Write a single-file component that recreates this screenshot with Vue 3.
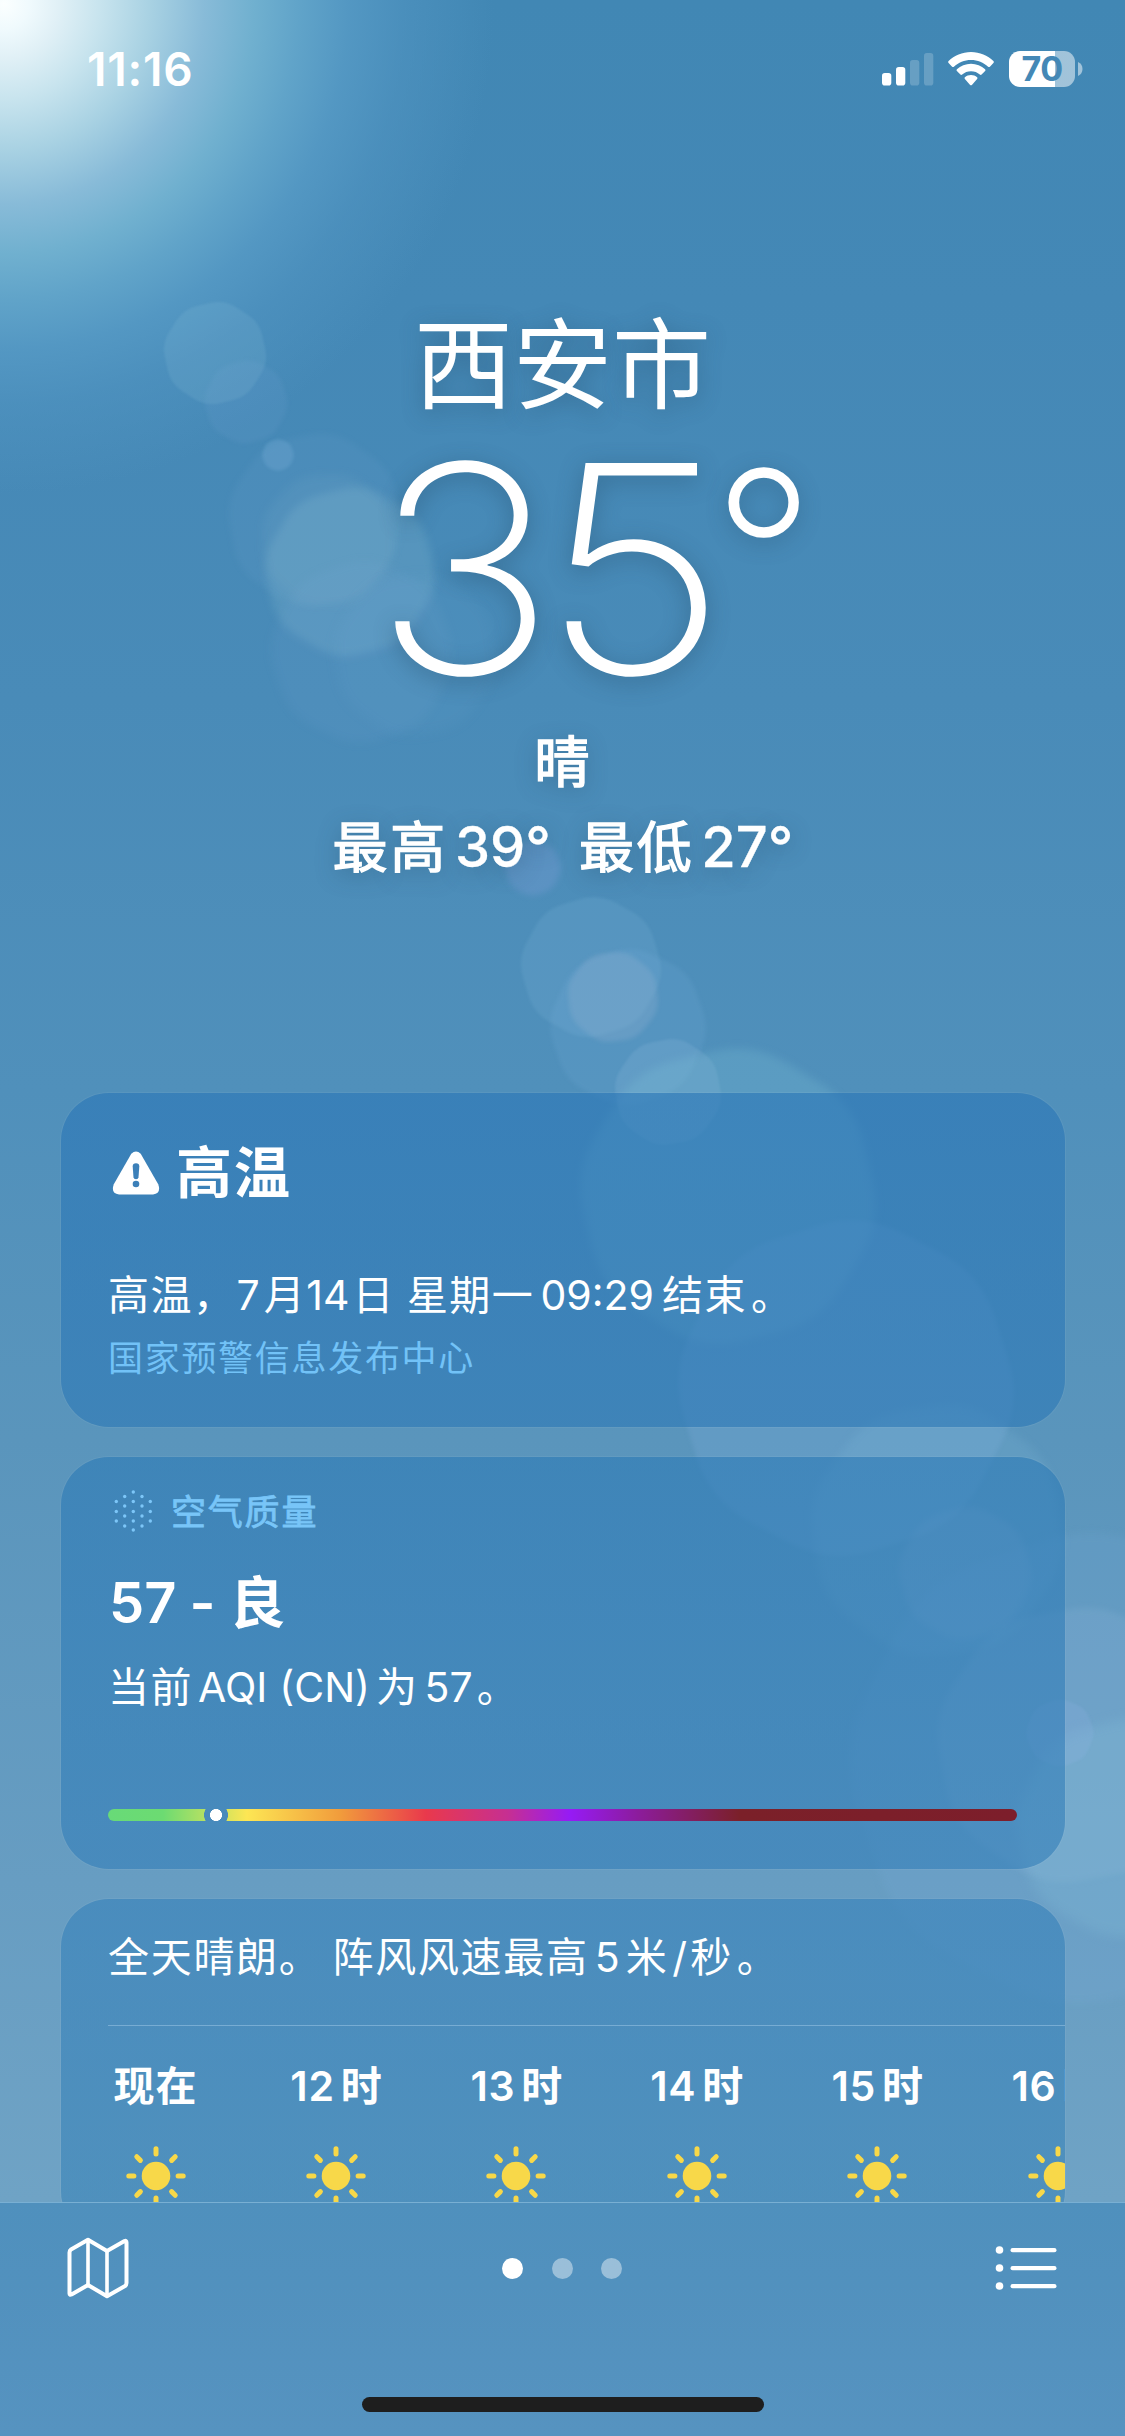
<script setup>
const flares = [
  { x: 215, y: 353, r: 52, c: '#9fd0e4', o: 0.14, b: 1, a: 10 },
  { x: 246, y: 402, r: 42, c: '#86b0e0', o: 0.1, b: 2, a: 5 },
  { x: 278, y: 455, r: 16, c: '#8fc4ea', o: 0.2, b: 1.5, a: 0 },
  { x: 315, y: 520, r: 88, c: '#86b0e0', o: 0.09, b: 3, a: 12 },
  { x: 350, y: 572, r: 86, c: '#9fcfdc', o: 0.17, b: 4, a: 8 },
  { x: 328, y: 540, r: 68, c: '#a8c8de', o: 0.08, b: 5, a: 20 },
  { x: 362, y: 652, r: 92, c: '#86b4e4', o: 0.08, b: 5, a: 4 },
  { x: 415, y: 655, r: 82, c: '#86b4e4', o: 0.07, b: 6, a: 14 },
  { x: 533, y: 868, r: 28, c: '#8fa4e0', o: 0.24, b: 3, a: 0 },
  { x: 591, y: 967, r: 71, c: '#8fc0e4', o: 0.15, b: 1.5, a: 6 },
  { x: 613, y: 997, r: 46, c: '#b0bcd8', o: 0.2, b: 2, a: 16 },
  { x: 628, y: 1027, r: 79, c: '#86bce4', o: 0.13, b: 2, a: 3 },
  { x: 668, y: 1092, r: 54, c: '#a0c8e4', o: 0.16, b: 1, a: 12 },
  { x: 728, y: 1196, r: 150, c: '#84c8dc', o: 0.22, b: 4, a: 9 },
  { x: 846, y: 1388, r: 170, c: '#8cb8e8', o: 0.18, b: 2, a: 5 },
  { x: 937, y: 1530, r: 128, c: '#8cc4e4', o: 0.14, b: 4, a: 14 },
  { x: 965, y: 1573, r: 67, c: '#a8bce0', o: 0.17, b: 3, a: 7 },
  { x: 1085, y: 1768, r: 238, c: '#80b4e8', o: 0.12, b: 4, a: 4 },
  { x: 1075, y: 1745, r: 140, c: '#a0c4e6', o: 0.15, b: 3, a: 12 },
  { x: 1125, y: 1828, r: 110, c: '#98d4e4', o: 0.16, b: 6, a: 6 },
  { x: 1060, y: 1733, r: 34, c: '#9cb8ec', o: 0.17, b: 1, a: 0 },
].map((f) => {
  const n = 8
  const r = f.r * 1.04
  const pts = []
  for (let i = 0; i < n; i++) {
    const t = ((i * 45 + f.a) * Math.PI) / 180
    pts.push([f.x + r * Math.cos(t), f.y + r * Math.sin(t)])
  }
  // octagon with softened corners
  const at = (p, q, k) => `${(p[0] + (q[0] - p[0]) * k).toFixed(1)} ${(p[1] + (q[1] - p[1]) * k).toFixed(1)}`
  const d = pts.map((p, i) => {
    const prev = pts[(i + n - 1) % n]
    const next = pts[(i + 1) % n]
    return `${i ? 'L' : 'M'}${at(p, prev, 0.34)}Q${p[0].toFixed(1)} ${p[1].toFixed(1)} ${at(p, next, 0.34)}`
  }).join('')
  return { ...f, d: d + 'Z' }
})

const hours = ['', '12', '13', '14', '15', '16']
const rays = [0, 45, 90, 135, 180, 225, 270, 315]
const haze = [
  [25.3, 13], [25.3, 22.5], [25.3, 32.5], [25.3, 42], [25.3, 51],
  [16.7, 17.5], [16.7, 27], [16.7, 37], [16.7, 47],
  [34, 17.5], [34, 27], [34, 37], [34, 47],
  [8.3, 22.5], [8.3, 32.5], [8.3, 42],
  [42.3, 22.5], [42.3, 32.5], [42.3, 42],
]
const aqiMarker = 11.9
</script>

<template>
  <div class="screen">
    <div class="sun-glow"></div>
    <svg class="sky" width="1125" height="2202" viewBox="0 0 1125 2202">
      <path v-for="(f, i) in flares" :key="i" :d="f.d" :fill="f.c" :fill-opacity="f.o" :style="{ filter: `blur(${f.b}px)` }" />
    </svg>

    <div class="content">
      <header class="status">
        <span class="time">11:16</span>
        <div class="indicators">
          <svg width="52" height="34" viewBox="0 0 52 34">
            <rect x="0" y="21" width="9.3" height="12.5" rx="2.8" fill="#fff" />
            <rect x="14" y="15" width="9.3" height="18.5" rx="2.8" fill="#fff" />
            <rect x="28" y="8" width="9.3" height="25.5" rx="2.8" fill="#fff" opacity=".2" />
            <rect x="42" y="1" width="9.3" height="32.5" rx="2.8" fill="#fff" opacity=".2" />
          </svg>
          <svg class="wifi" width="46" height="34" viewBox="0 0 46 34" fill="#fff">
            <path d="M23 0C14.200 0 6.300 3.500.6 9.100Q-.3 10 .6 11L4.100 14.700Q5 15.500 5.900 14.700C10.400 10.500 16.400 7.900 23 7.900S35.600 10.500 40.100 14.700Q41 15.500 41.900 14.700L45.400 11Q46.300 10 45.400 9.100C39.700 3.500 31.800 0 23 0Z" />
            <path d="M23 11.800C17.600 11.800 12.600 13.900 8.900 17.300Q8 18.200 8.900 19.100L12.400 22.600Q13.300 23.400 14.200 22.600C16.500 20.500 19.600 19.300 23 19.300S29.500 20.500 31.800 22.600Q32.700 23.400 33.600 22.600L37.100 19.100Q38 18.200 37.100 17.300C33.400 13.900 28.400 11.800 23 11.800Z" />
            <path d="M23 23C20.700 23 18.500 23.800 16.900 25.200Q16 26 16.900 26.900L22.100 32.900Q23 33.800 23.900 32.900L29.100 26.900Q30 26 29.100 25.200C27.500 23.800 25.300 23 23 23Z" />
          </svg>
          <div class="battery"><span>70</span></div>
          <svg class="nub" width="5" height="14" viewBox="0 0 5 14"><path d="M0 0Q4.500 2 4.500 7T0 14Z" fill="#fff" opacity=".5" /></svg>
        </div>
      </header>

      <section class="current">
        <h1 class="city">西安市</h1>
        <div class="temp"><span class="three">3</span><span class="five">5</span><span class="deg">°</span></div>
        <div class="sky-state">晴</div>
        <div class="range">
          <span class="cn">最高</span><span class="val">39°</span><span class="cn low">最低</span><span class="val">27°</span>
        </div>
      </section>

      <section class="card alert">
        <div class="alert-head">
          <svg width="48" height="44" viewBox="0 0 48 44">
            <path d="M19.300 2.800Q24 -2 28.700 2.800L46.200 33.200Q49.500 42.500 41 43.500H7Q-1.500 42.500 1.800 33.200Z" fill="#fff" />
            <path d="M20.700 15.500Q20.700 12.300 24 12.300T27.300 15.500L26.500 26.300Q26.200 28.200 24 28.200T21.500 26.300Z" fill="#3c80b9" />
            <circle cx="24" cy="33" r="3.300" fill="#3c80b9" />
          </svg>
          <h2>高温</h2>
        </div>
        <p class="text alert-text"><span>高温，</span><span class="n m1">7</span><span class="m4">月</span><span class="n">14</span><span class="m3">日</span><span class="m12">星期一</span><span class="n m6">09:29</span><span class="m8">结束</span><span class="m4">。</span></p>
        <p class="source">国家预警信息发布中心</p>
      </section>

      <section class="card air">
        <div class="air-head">
          <svg width="62" height="64" viewBox="0 0 62 64">
            <circle v-for="(p, i) in haze" :key="i" :cx="p[0]" :cy="p[1]" r="1.700" fill="#7cc6f8" />
          </svg>
          <span>空气质量</span>
        </div>
        <div class="air-value"><span>57</span><span class="dash">-</span><span class="grade">良</span></div>
        <p class="text air-text"><span>当前</span><span class="n m5">AQI</span><span class="n m12">(CN)</span><span class="m6">为</span><span class="n m6">57</span><span class="m4">。</span></p>
        <div class="scale"><i class="marker" :style="{ left: aqiMarker + '%' }"></i></div>
      </section>

      <section class="card hourly">
        <p class="text summary"><span>全天晴朗。</span><span class="m11">阵风风速最高</span><span class="n m6">5</span><span class="m6">米</span><span class="n m4">/</span><span class="m3">秒</span><span class="m4">。</span></p>
        <div class="hours">
          <div v-for="h in hours" :key="h" class="hour">
            <div class="label"><template v-if="h"><span>{{ h }}</span><span class="shi">时</span></template><span v-else class="now">现在</span></div>
            <svg width="60" height="60" viewBox="-30 -30 60 60">
              <circle r="14.300" fill="#f8d849" />
              <line v-for="r in rays" :key="r" x1="0" y1="-22.100" x2="0" y2="-27.200" :transform="`rotate(${r})`" stroke="#f8d849" stroke-width="5" stroke-linecap="round" />
            </svg>
          </div>
        </div>
      </section>
    </div>

    <nav class="toolbar">
      <div class="tools">
        <svg width="64" height="62" viewBox="0 0 64 62" fill="none" stroke="#fff" stroke-width="4" stroke-linejoin="round" stroke-linecap="round">
          <path d="M3.500 15.500Q3.500 13.500 5 12.500L22 2.800L41 14L58.500 4Q60.500 3.200 60.500 5.500V46Q60.500 48 59 49L41 59.300L22 48L5.500 57.500Q3.500 58.300 3.500 56.500Z" />
          <path d="M22 3V48M41 14V59" stroke-width="3.600" />
        </svg>
        <div class="dots"><i class="on"></i><i></i><i></i></div>
        <svg width="62" height="44" viewBox="0 0 62 44" fill="#fff">
          <template v-for="y in [4, 22, 40]" :key="y">
            <circle cx="4.500" :cy="y" r="3.800" />
            <rect x="15.500" :y="y - 2" width="46" height="4.300" rx="2.100" />
          </template>
        </svg>
      </div>
      <div class="home"></div>
    </nav>
  </div>
</template>

<style>
html, body { margin: 0; padding: 0; }
</style>

<style scoped>
.screen {
  position: relative;
  display: flex;
  flex-direction: column;
  width: 1125px;
  height: 2436px;
  overflow: hidden;
  color: #fff;
  font-family: Inter, "Noto Sans CJK SC", sans-serif;
  background: linear-gradient(180deg, #4187b4 0, #4488b6 300px, #498bb8 700px, #5090bb 1090px, #5a95bc 1440px, #679dc2 1880px, #6fa3c5 2202px);
}
h1, h2, p { margin: 0; font-weight: 400; }
.sky { position: absolute; left: 0; top: 0; }
.sun-glow {
  position: absolute;
  left: 0;
  top: 0;
  width: 520px;
  height: 520px;
  background: radial-gradient(circle at 4px 4px, #fbffff 0, #f0fafd 25px, #e0f0f6 55px, #c8e4ee 95px, #a9d2e3 145px, #88bbd8 200px, #70b0cf 250px, rgba(98, 165, 202, .95) 295px, rgba(86, 154, 197, .85) 345px, rgba(80, 148, 193, .6) 400px, rgba(72, 142, 188, 0) 490px);
}
.content {
  position: relative;
  display: flex;
  flex-direction: column;
  height: 2202px;
  overflow: hidden;
}

.status {
  display: flex;
  justify-content: space-between;
  flex: none;
  box-sizing: border-box;
  height: 308px;
  padding: 44px 42px 0 87px;
}
.time { font-size: 46px; line-height: 50px; font-weight: 600; letter-spacing: .8px; }
.indicators { display: flex; align-items: center; height: 36px; margin-top: 7px; }
.wifi { margin-left: 14px; }
.battery {
  width: 66px;
  height: 36px;
  margin-left: 15px;
  border-radius: 11px;
  background: linear-gradient(90deg, #fff 46px, rgba(255, 255, 255, .5) 46px);
  text-align: center;
}
.battery span { font-size: 34px; line-height: 36px; font-weight: 700; color: #4488b6; letter-spacing: -.5px; }
.nub { margin-left: 3px; }

.current {
  display: flex;
  flex-direction: column;
  align-items: center;
  flex: none;
  height: 785px;
  text-shadow: 0 5px 22px rgba(35, 75, 105, .45);
}
.city { font-size: 99px; line-height: 114px; }
.temp {
  display: flex;
  align-self: flex-start;
  margin-top: 2px;
  padding-left: 373px;
  font-size: 290px;
  line-height: 290px;
  font-weight: 200;
}
.three { transform: scaleX(1.06); transform-origin: left; }
.five { margin-left: -5px; transform: scaleX(1.12); transform-origin: left; }
.deg { margin: -17px 0 17px 5px; font-size: 224px; line-height: 290px; font-weight: 200; -webkit-text-stroke: 1.600px #fff; }
.sky-state { margin-top: 13px; margin-right: 1px; font-size: 55px; line-height: 70px; -webkit-text-stroke: 1.700px #fff; }
.range {
  display: flex;
  align-items: baseline;
  margin-top: 14px;
  padding-left: 1px;
  font-size: 56px;
  line-height: 72px;
  font-weight: 500;
}
.range .cn { font-size: 55px; font-weight: 400; letter-spacing: 2.7px; -webkit-text-stroke: 1.400px #fff; }
.range .val { margin-left: 7px; -webkit-text-stroke: .3px #fff; }
.range .low { margin-left: 28px; }

.card {
  flex: none;
  box-sizing: border-box;
  width: 1004px;
  margin-left: 61px;
  padding-left: 47px;
  border-radius: 48px;
  overflow: hidden;
  box-shadow: 0 0 0 1px rgba(255, 255, 255, .05);
}
.alert { height: 334px; padding-top: 45px; background: linear-gradient(180deg, rgba(42, 118, 183, .6), rgba(44, 120, 182, .6)); }
.air { height: 412px; margin-top: 30px; padding-top: 32px; background: linear-gradient(180deg, rgba(44, 122, 182, .6), rgba(52, 127, 185, .6)); }
.hourly { height: 340px; margin-top: 30px; padding-top: 31px; background: linear-gradient(180deg, rgba(54, 129, 186, .6), rgba(58, 132, 184, .6) 303px); }

.text { display: flex; font-size: 41px; line-height: 54px; letter-spacing: 1.5px; white-space: nowrap; }
.text .n { letter-spacing: 0; }
.m1 { margin-left: 1px; }
.m3 { margin-left: 3px; }
.m4 { margin-left: 4px; }
.m5 { margin-left: 5px; }
.m6 { margin-left: 6px; }
.m8 { margin-left: 8px; }
.m11 { margin-left: 11px; }
.m12 { margin-left: 12px; }

.alert-head { display: flex; height: 70px; }
.alert-head svg { margin: 13px 0 0 4px; }
.alert-head h2 { margin-left: 16px; font-size: 56px; line-height: 70px; font-weight: 700; letter-spacing: 2px; }
.alert-text { margin-top: 60px; }
.source { margin-top: 13px; font-size: 35px; line-height: 46px; letter-spacing: 1.7px; color: #72c2f7; }

.air-head { display: flex; height: 46px; color: #78c5f8; font-size: 35px; line-height: 46px; letter-spacing: 1.8px; -webkit-text-stroke: .8px #78c5f8; }
.air-head svg { flex: none; margin-top: -10px; }
.air-head span { padding-left: 1px; }
.air-value { display: flex; margin: 33px 0 0 1px; font-size: 56px; line-height: 70px; font-weight: 600; }
.dash { margin-left: 13px; }
.grade { margin-left: 14px; }
.air-text { margin-top: 22px; }
.scale {
  position: relative;
  width: 909px;
  height: 12px;
  margin-top: 95px;
  border-radius: 6px;
  background: linear-gradient(90deg, #68da78 0, #6cdb72 55px, #fde654 139px, #f19c3c 232px, #e9394c 318px, #c62f92 400px, #961bf5 462px, #8c1c9c 530px, #7b2029 632px, #7d1e2b 909px);
}
.marker {
  position: absolute;
  top: 0;
  width: 12px;
  height: 12px;
  margin-left: -6px;
  border-radius: 50%;
  background: #fff;
}
.marker::before {
  content: '';
  position: absolute;
  left: -6px;
  top: 0;
  width: 24px;
  height: 12px;
  background: radial-gradient(circle at 12px 6px, #fff 5.700px, #488abb 6.300px, #488abb 11.600px, transparent 12.200px);
}

.summary { padding-bottom: 41px; border-bottom: 1px solid rgba(190, 220, 245, .38); letter-spacing: 1.7px; }
.hours { display: flex; margin: 33px 0 0 -42.600px; }
.hour { display: flex; flex-direction: column; align-items: center; flex: none; width: 180.400px; }
.label { display: flex; font-size: 41px; line-height: 54px; font-weight: 600; letter-spacing: .7px; }
.shi { margin-left: 6px; letter-spacing: 0; }
.now { letter-spacing: 1px; }
.hour svg { margin-top: 33px; }

.toolbar {
  position: relative;
  display: flex;
  flex-direction: column;
  align-items: center;
  box-sizing: border-box;
  height: 234px;
  border-top: 1px solid #79afd3;
  background: linear-gradient(180deg, #4f90bd, #5693c0);
}
.tools { display: flex; align-items: center; justify-content: space-between; box-sizing: border-box; width: 1125px; height: 62px; margin-top: 34px; padding: 0 68px 0 65.500px; }
.dots { display: flex; gap: 28.600px; }
.dots i { width: 21px; height: 21px; border-radius: 50%; background: rgba(255, 255, 255, .42); }
.dots i.on { background: #fff; }
.home { width: 402px; height: 15px; margin-top: 98px; border-radius: 8px; background: #1e1e1e; }
</style>
